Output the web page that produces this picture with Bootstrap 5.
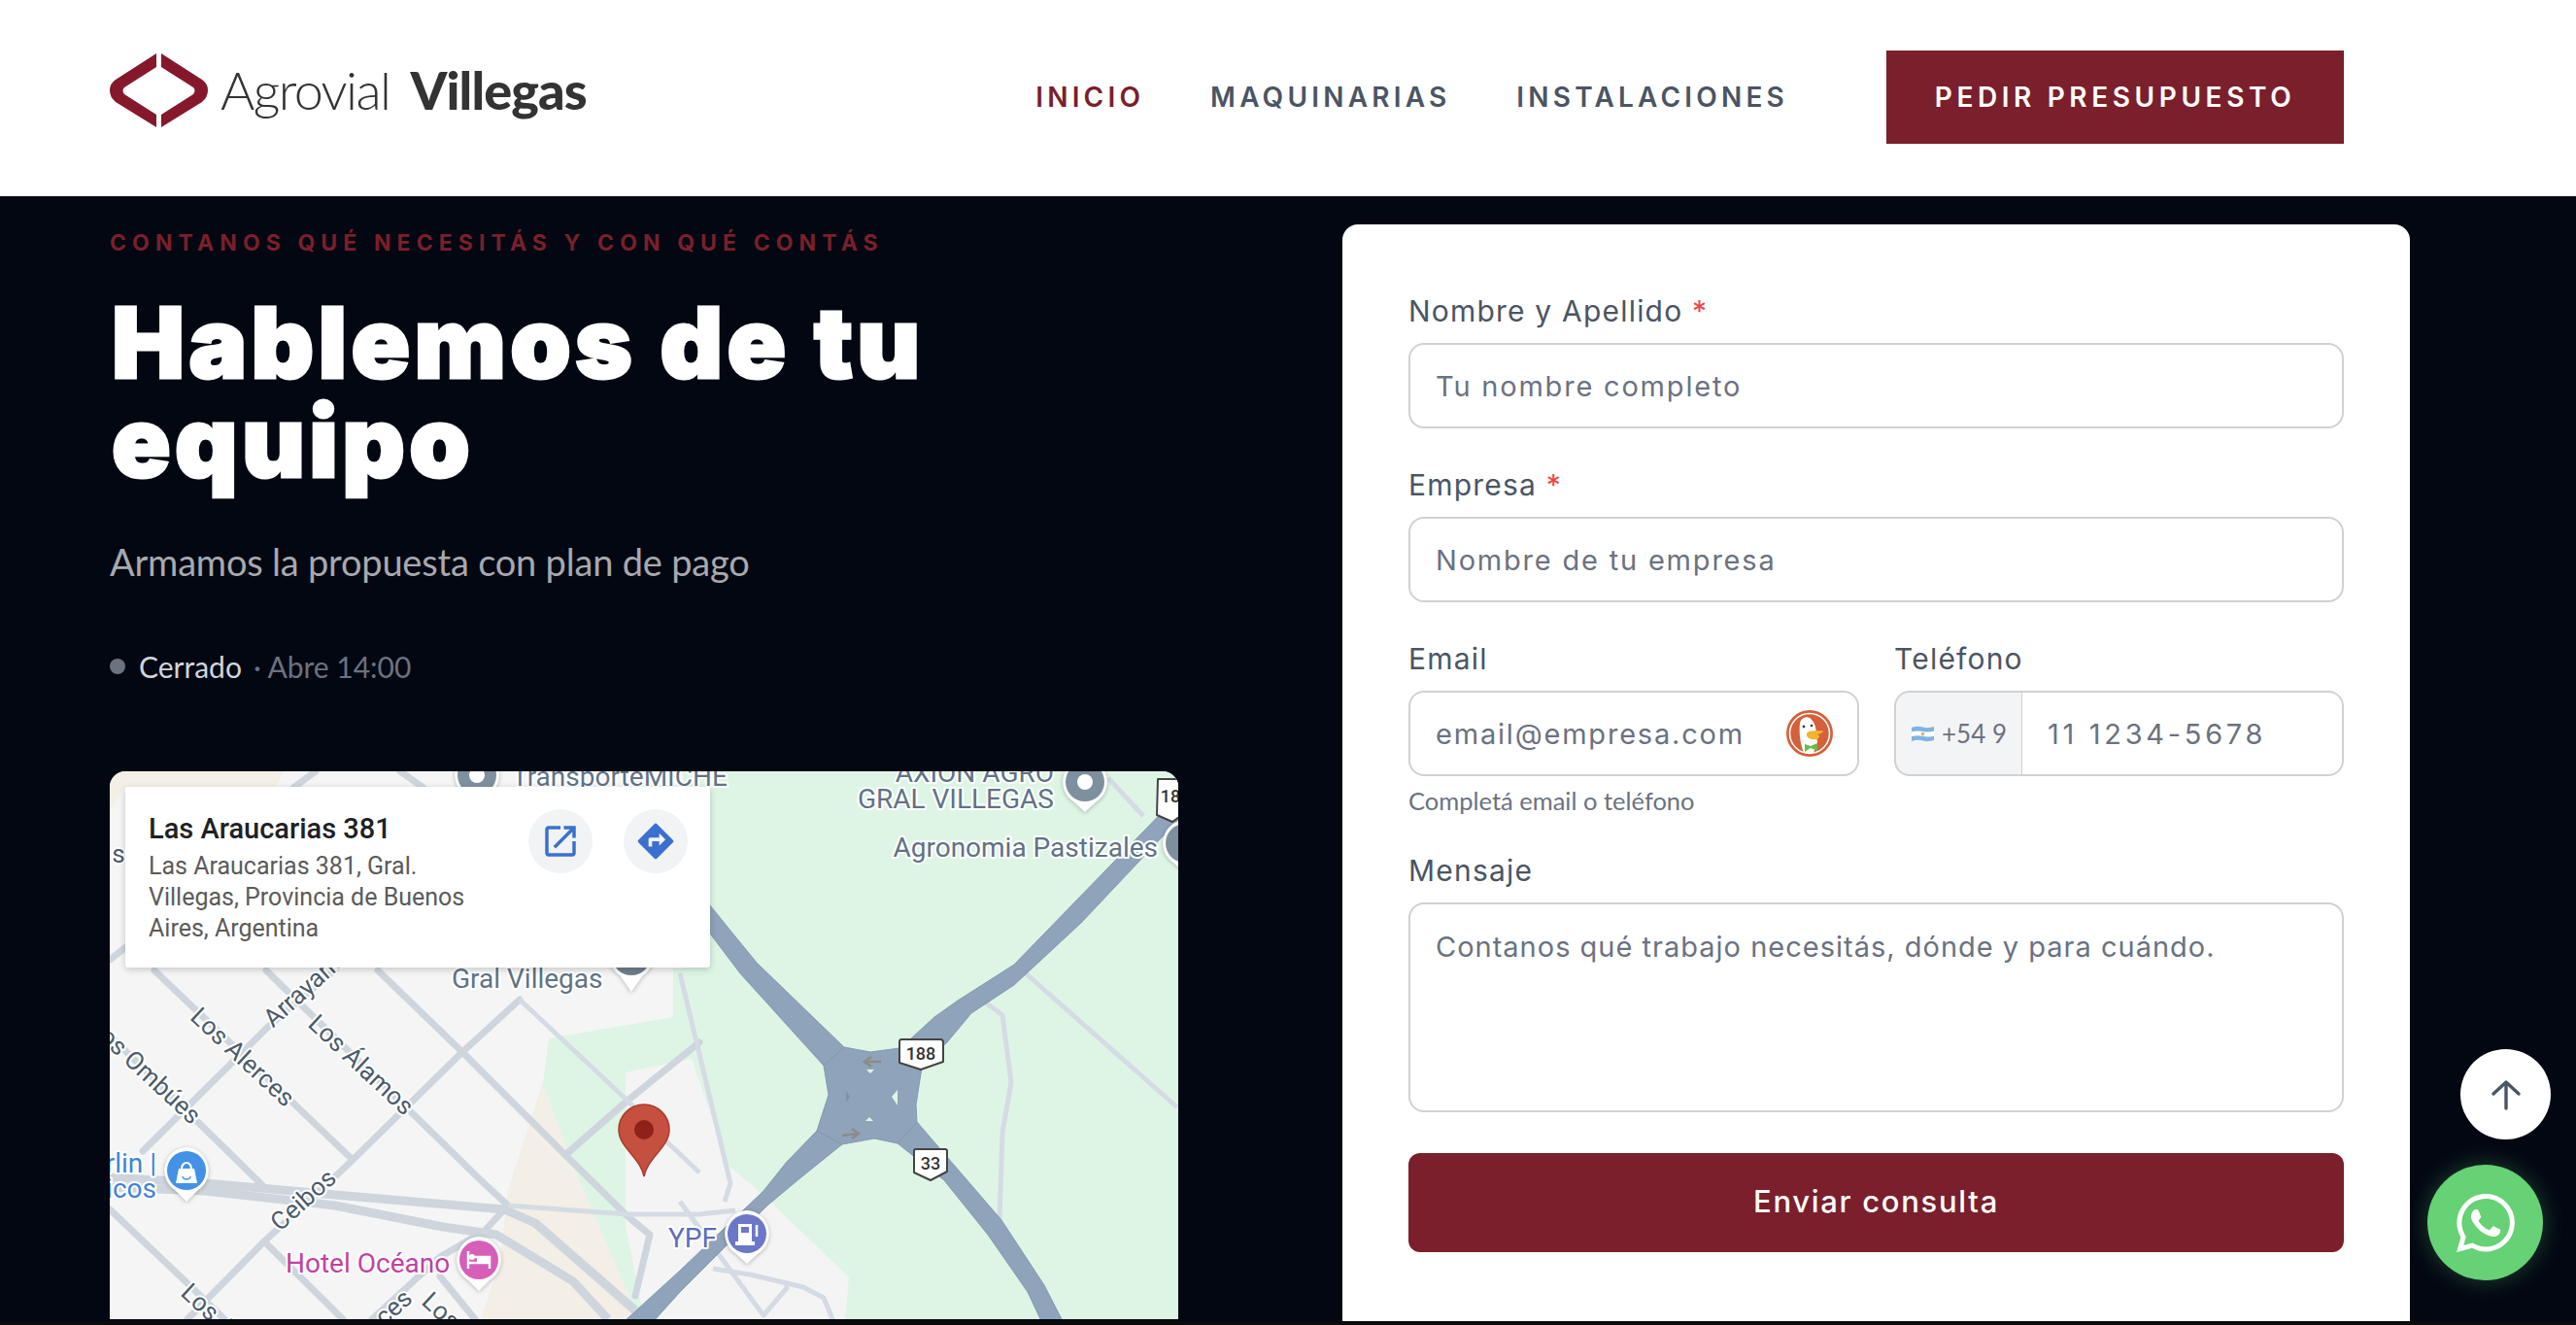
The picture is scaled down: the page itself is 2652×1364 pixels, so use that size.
<!DOCTYPE html>
<html lang="es">
<head>
  <meta charset="UTF-8">
  <meta name="viewport" content="width=device-width, initial-scale=1.0">
  <title>Agrovial Villegas - Contacto</title>
  <link href="https://cdn.jsdelivr.net/npm/bootstrap@5.3.0/dist/css/bootstrap.min.css" rel="stylesheet">
  <style>
    body { background-color: #0b0b0b; height: 1364px; overflow: hidden; font-family: "Inter", "Liberation Sans", sans-serif; }
    .page-shell { height: 1360px; overflow: hidden; background-color: #030712; position: relative; }

    .top-bar { height: 202px; background: #fff; padding: 0 239px 2px 113px; }
    .logo-link { margin-bottom: 14px; }
    .logo-text { font-family: "Lato", sans-serif; font-size: 54px; color: #333; margin-left: 13px; letter-spacing: -1.6px; line-height: 1; font-weight: 300; }
    .logo-text b { font-weight: 900; letter-spacing: -0.9px; margin-left: 8px; }
    .menu-link { font-size: 28px; font-weight: 600; letter-spacing: 4.2px; color: #4b5563; text-decoration: none; }
    .menu-link.on { color: #7a1f2b; }
    .menu-gap { gap: 68px; margin-right: 101px; }
    .quote-btn { width: 471px; height: 96px; background: #7a1f2b; color: #fff; border: 0; border-radius: 0; font-size: 28px; font-weight: 600; letter-spacing: 4.6px; }

    .hero-wrap { padding: 29px 0 0 113px; gap: 169px; }
    .hero-left { width: 1100px; flex: none; }
    .kicker { font-size: 23px; font-weight: 700; color: #7a1f2b; letter-spacing: 6.1px; line-height: 1; margin: 8px 0 0; }
    .hero-title { font-size: 100px; font-weight: 900; color: #fff; -webkit-text-stroke: 3px #fff; line-height: 102px; letter-spacing: 4.4px; margin: 40px 0 0; padding-left: 2px; width: 900px; }
    .hero-sub { font-family: "Lato", sans-serif; font-size: 38px; color: #a7a9ae; line-height: 1; margin: 53px 0 0; letter-spacing: -0.2px; }
    .status-line { font-family: "Lato", sans-serif; font-size: 30px; line-height: 1; margin-top: 74px; color: #d1d5db; }
    .status-dot { width: 16px; height: 16px; border-radius: 50%; background: #6b7280; margin-right: 14px; }
    .status-next { color: #6b7280; margin-left: 12px; }

    .map-box { position: relative; width: 1100px; height: 564px; margin-top: 93px; border-radius: 16px 16px 0 0; overflow: hidden; background: #f5f5f5; }
    .map-box svg { display: block; font-family: "Roboto", sans-serif; }
    .map-label { font-size: 28px; fill: #5f7385; paint-order: stroke; stroke: #fff; stroke-width: 4px; stroke-linejoin: round; }
    .street { font-size: 26px; fill: #4c5b6b; paint-order: stroke; stroke: #fff; stroke-width: 4px; stroke-linejoin: round; }
    .shield-num { font-size: 18px; font-weight: 500; fill: #333; text-anchor: middle; }
    .map-card { position: absolute; left: 16px; top: 16px; width: 602px; height: 186px; background: #fff; border-radius: 3px; box-shadow: 0 2px 7px rgba(0,0,0,.2); padding: 25px 24px; font-family: "Roboto", sans-serif; }
    .map-card-title { font-size: 29px; font-weight: 500; color: #202124; line-height: 36px; }
    .map-card-addr { font-size: 25px; color: #5b5b5b; line-height: 32px; margin-top: 5px; width: 350px; }
    .map-round { width: 66px; height: 66px; border-radius: 50%; background: #f1f3f4; margin-top: -2px; }
    .map-actions { gap: 32px; margin-right: -1px; }

    .form-panel { width: 1099px; height: 1200px; flex: none; background: #fff; border-radius: 16px 16px 0 0; padding: 74px 68px 0; }
    .field-label { font-size: 30px; font-weight: 400; color: #4b5563; letter-spacing: 1.2px; line-height: 1; margin: 0 0 18px; display: block; }
    .field-label span { color: #ef4444; }
    .field-input { height: 88px; border: 2px solid #d1d1d1; border-radius: 16px; font-size: 29px; padding: 0 26px; color: #374151; letter-spacing: 1.8px; }
    .field-input::placeholder { color: #6b7280; opacity: 1; }
    .field-area { height: 216px; resize: none; padding-top: 22px; letter-spacing: 1px; }
    .field-block { margin-bottom: 43px; }
    .two-fields { gap: 36px; margin-bottom: 13px; }
    .email-col { width: 464px; flex: none; }
    .phone-col { width: 463px; flex: none; }
    .help-text { font-family: "Lato", sans-serif; font-size: 25.5px; color: #6b7280; line-height: 1; margin: 0 0 43px; }
    .email-wrap { position: relative; }
    .duck-mark { position: absolute; right: 27px; top: 20px; }
    .phone-prefix { width: 133px; flex: none; height: 88px; background: #f3f4f6; border: 2px solid #d1d1d1; border-radius: 16px 0 0 16px; color: #6b7280; font-family: "Lato", sans-serif; font-size: 26px; padding: 0 0 0 16px; gap: 8px; }
    .phone-input { border-radius: 0 16px 16px 0 !important; border-left: 0; letter-spacing: 3.7px; }
    .send-btn { width: 100%; height: 102px; background: #7a1f2b; color: #fff; border: 0; border-radius: 12px; font-size: 31px; font-weight: 500; letter-spacing: 1.7px; margin-top: -1px; }

    .go-top { position: absolute; left: 2533px; top: 1080px; width: 93px; height: 93px; border-radius: 50%; background: #fff; border: 0; padding: 0; }
    .wa-float { position: absolute; left: 2499px; top: 1199px; width: 119px; height: 119px; border-radius: 50%; background: #66d175; box-shadow: 0 0 24px rgba(102,209,117,.3); }
  </style>
</head>
<body>
<div class="page-shell">

  <header class="top-bar d-flex align-items-center">
    <a class="logo-link d-flex align-items-center text-decoration-none" href="#">
      <svg width="101" height="76" viewBox="0 0 101 76" fill="#85192b">
        <path d="M48 0L6 27Q0 31 0 38Q0 45 6 50L48 76V63L15 42Q12 38 15 35L48 14Z"/>
        <path d="M53 0L95 27Q101 31 101 38Q101 45 95 50L53 76V63L86 42Q89 38 86 35L53 14Z"/>
      </svg>
      <span class="logo-text">Agrovial <b>Villegas</b></span>
    </a>
    <nav class="d-flex align-items-center ms-auto menu-gap">
      <a class="menu-link on" href="#">INICIO</a>
      <a class="menu-link" href="#">MAQUINARIAS</a>
      <a class="menu-link" href="#">INSTALACIONES</a>
    </nav>
    <button class="btn quote-btn">PEDIR PRESUPUESTO</button>
  </header>

  <main class="hero-wrap d-flex align-items-start">
    <section class="hero-left">
      <p class="kicker">CONTANOS QUÉ NECESITÁS Y CON QUÉ CONTÁS</p>
      <h1 class="hero-title">Hablemos de tu equipo</h1>
      <p class="hero-sub">Armamos la propuesta con plan de pago</p>
      <div class="status-line d-flex align-items-center">
        <span class="status-dot"></span>Cerrado<span class="status-next">· Abre 14:00</span>
      </div>

      <div class="map-box">
        <svg width="1100" height="564" viewBox="0 0 1100 564">
          <!-- land -->
          <polygon fill="#def5e5" points="590,0 1100,0 1100,564 382,564 402,506 410,432 446,320 452,275 580,253 580,203 590,203"/>
          <polygon fill="#f3efe6" points="446,320 477,406 545,564 382,564 402,506 410,432"/>
          <polygon fill="#f3efe6" points="0,0 180,0 170,16 16,16 0,40"/>
          <polygon fill="#f4f4f4" points="531,310 599,296 637,406 677,440 761,521 757,564 550,564 531,469"/>

          <!-- streets -->
          <g fill="none" stroke="#ced5dd" stroke-width="7" stroke-linejoin="round" stroke-linecap="round">
            <path d="M46 205L248 398"/>
            <path d="M161 205L382 421L410 447"/>
            <path d="M276 205L363 289L469 395L533 458L556 477L541 540"/>
            <path d="M0 272L157 426"/>
            <path d="M34 391L165 261L236 201"/>
            <path d="M80 564L159 484L244 406L363 289L422 235"/>
            <path d="M469 395L533 339L607 279"/>
            <path d="M0 451L82 529L118 564"/>
            <path d="M159 484L240 564"/>
            <path d="M299 0L323 17M189 17L212 0"/>
            <path d="M0 194L28 172"/>
            <path d="M270 564L340 500L386 473L406 451"/>
            <path d="M340 520L376 564"/>
          </g>
          <g fill="none" stroke="#ced5dd" stroke-width="9" stroke-linejoin="round">
            <path d="M0 418L98 424L232 436L406 451L438 465L541 555"/>
            <path d="M0 428L98 432L232 447L343 469L398 477L477 525L513 564"/>
          </g>
          <g fill="none" stroke="#d5dbe4" stroke-width="5" stroke-linejoin="round">
            <path d="M422 235L533 339L572 380L607 413"/>
            <path d="M587 208L639 424L633 443"/>
            <path d="M410 447L533 456L607 456L644 452"/>
            <path d="M935 201L1099 346"/>
            <path d="M899 236L919 251L928 320L919 372L916 462"/>
            <path d="M1028 7L1064 46"/>
            <path d="M587 443L673 560L697 532L697 525"/>
            <path d="M621 512L659 518L714 531L735 542L745 566"/>
          </g>

          <!-- route 33 / 188 -->
          <g fill="#8fa3ba" stroke="#8399b3" stroke-width="1" stroke-linejoin="round">
            <polygon points="756,284 666,197 639,164 618,138 590,110 580,125 601,141 618,167 649,208 735,303"/>
            <polygon points="1100,25 931,199 873,236 849,253 825,275 835,305 862,279 887,249 931,220 1000,156 1100,50"/>
            <polygon points="831,361 918,462 962,529 981,566 959,566 945,536 904,477 859,421 811,383"/>
            <polygon points="728,370 697,402 673,432 587,514 530,566 560,566 587,536 635,488 677,447 708,421 754,384"/>
            <polygon points="756,284 783,289 813,285 836,305 830,343 831,361 811,383 787,378 754,384 728,370 740,333 735,303"/>
          </g>
          <polygon fill="#def5e5" points="779,307 787,307 783,311"/>
          <polygon fill="#def5e5" points="805,335 811,328 811,344"/>
          <polygon fill="#7e94ae" points="758,329 762,335 758,341"/>
          <polygon fill="#def5e5" points="778,360 786,360 782,356"/>
          <path d="M794 299H778M784 294L777 299L784 304" fill="none" stroke="#8b8b8b" stroke-width="2.5"/>
          <path d="M754 375L770 373M764 368L771 373L764 378" fill="none" stroke="#8b8b8b" stroke-width="2.5"/>

          <!-- shields -->
          <g fill="#fff" stroke="#444" stroke-width="2" stroke-linejoin="round">
            <path d="M815 276H855Q858 276 858 279V299L835 307L813 300V279Q813 276 815 276Z"/>
            <path d="M830 389H860Q862 389 862 391V412L845 421L828 413V391Q828 389 830 389Z"/>
            <path d="M1079 8H1104V45L1094 52L1078 45Z"/>
          </g>
          <text class="shield-num" x="835" y="297">188</text>
          <text class="shield-num" x="845" y="410">33</text>
          <text class="shield-num" x="1092" y="32">18</text>

          <!-- place labels -->
          <text class="map-label" x="414" y="15">TransporteMICHE</text>
          <text class="map-label" x="972" y="11" text-anchor="end">AXION AGRO</text>
          <text class="map-label" x="972" y="38" text-anchor="end">GRAL VILLEGAS</text>
          <text class="map-label" x="1079" y="88" text-anchor="end">Agronomia Pastizales</text>
          <text class="map-label" x="352" y="223">Gral Villegas</text>
          <text class="map-label" x="181" y="516" style="fill:#c23fa3">Hotel Océano</text>
          <text class="map-label" x="625" y="490" text-anchor="end" style="fill:#5c6bc0">YPF</text>
          <text class="map-label" x="48" y="413" text-anchor="end" style="fill:#3f83d8">rlin |</text>
          <text class="map-label" x="48" y="439" text-anchor="end" style="fill:#3f83d8">icos</text>

          <!-- street names -->
          <text class="street" x="9" y="85" text-anchor="middle" dominant-baseline="central">s</text>
          <text class="street" text-anchor="middle" dominant-baseline="central" transform="translate(137 294) rotate(43)">Los Alerces</text>
          <text class="street" text-anchor="middle" dominant-baseline="central" transform="translate(259 302) rotate(43)">Los Álamos</text>
          <text class="street" dominant-baseline="central" transform="translate(162 258) rotate(-42)">Arrayanes</text>
          <text class="street" text-anchor="end" dominant-baseline="central" transform="translate(90 358) rotate(43)">os Ombúes</text>
          <text class="street" text-anchor="middle" dominant-baseline="central" transform="translate(199 441) rotate(-42)">Ceibos</text>
          <text class="street" dominant-baseline="central" transform="translate(78 532) rotate(43)">Los Alerces</text>
          <text class="street" text-anchor="end" dominant-baseline="central" transform="translate(307 538) rotate(-42)">ces</text>
          <text class="street" dominant-baseline="central" transform="translate(326 541) rotate(43)">Los</text>

          <!-- pins -->
          <g fill="#fff" style="filter:drop-shadow(0 1px 2px rgba(0,0,0,.25))">
            <path d="M378 -20a24 24 0 0 1 12 44L378 36L366 24a24 24 0 0 1 12-44Z"/>
            <path d="M1004 -13a24 24 0 0 1 12 44L1004 42L992 31a24 24 0 0 1 12-44Z"/>
            <path d="M1107 50a24 24 0 0 1 12 44L1107 105L1095 94a24 24 0 0 1 12-44Z"/>
            <path d="M537 166a24 24 0 0 1 12 44L537 227L525 210a24 24 0 0 1 12-44Z"/>
            <path d="M79 387a24 24 0 0 1 12 44L79 443L67 431a24 24 0 0 1 12-44Z"/>
            <path d="M380 479a24 24 0 0 1 12 44L380 535L368 523a24 24 0 0 1 12-44Z"/>
            <path d="M656 452a24 24 0 0 1 12 44L656 507L644 496a24 24 0 0 1 12-44Z"/>
          </g>
          <circle cx="378" cy="4" r="20" fill="#7e8f9e"/><circle cx="378" cy="4" r="8" fill="#fff"/>
          <circle cx="1004" cy="11" r="20" fill="#7e8f9e"/><circle cx="1004" cy="11" r="8" fill="#fff"/>
          <circle cx="1107" cy="74" r="20" fill="#7e8f9e"/>
          <circle cx="537" cy="190" r="20" fill="#6f7f8e"/>
          <circle cx="79" cy="411" r="20" fill="#4392e6"/>
          <path d="M71 409H87L90 424H68Z" fill="#fff"/><path d="M74 409a5 6 0 0 1 10 0" fill="none" stroke="#fff" stroke-width="2"/>
          <path d="M75 417a4 3 0 0 0 8 0" fill="none" stroke="#4392e6" stroke-width="1.5"/>
          <circle cx="380" cy="503" r="20" fill="#d65fb8"/>
          <path d="M369 494V512M369 506H391V512M391 506V500H376" fill="none" stroke="#fff" stroke-width="2.5"/>
          <rect x="378" y="499" width="13" height="7" fill="#fff"/><circle cx="373" cy="500" r="3" fill="#fff"/>
          <circle cx="656" cy="476" r="20" fill="#6b78c8"/>
          <path d="M647 466H661V484H664V488H644V484H647Z" fill="#fff"/><rect x="650" y="469" width="8" height="6" fill="#6b78c8"/>
          <path d="M666 467V479" stroke="#fff" stroke-width="2.5"/>

          <!-- marker -->
          <path d="M550 417C546 397 524 387 524 369A26 26 0 0 1 576 369C576 387 554 397 550 417Z" fill="#c5503f" stroke="#a83b2c" stroke-width="1.5"/>
          <circle cx="550" cy="369" r="10" fill="#8e2118"/>
        </svg>

        <div class="map-card d-flex justify-content-between align-items-start">
          <div>
            <div class="map-card-title">Las Araucarias 381</div>
            <div class="map-card-addr">Las Araucarias 381, Gral. Villegas, Provincia de Buenos Aires, Argentina</div>
          </div>
          <div class="map-actions d-flex">
            <span class="map-round d-flex align-items-center justify-content-center">
              <svg width="42" height="42" viewBox="0 0 24 24" fill="#3b70d0"><path d="M19 19H5V5h7V3H5c-1.11 0-2 .9-2 2v14c0 1.1.89 2 2 2h14c1.1 0 2-.9 2-2v-7h-2v7zM14 3v2h3.59l-9.83 9.83 1.41 1.41L19 6.41V10h2V3h-7z"/></svg>
            </span>
            <span class="map-round d-flex align-items-center justify-content-center">
              <svg width="44" height="44" viewBox="0 0 24 24" fill="#3b70d0"><path d="M21.71 11.29l-9-9a.996.996 0 00-1.41 0l-9 9a.996.996 0 000 1.41l9 9c.39.39 1.02.39 1.41 0l9-9a.996.996 0 000-1.41zM14 14.5V12h-4v3H8v-4c0-.55.45-1 1-1h5V7.5l3.5 3.5-3.5 3.5z"/></svg>
            </span>
          </div>
        </div>
      </div>
    </section>

    <section class="form-panel">
      <form>
        <div class="field-block">
          <label class="field-label">Nombre y Apellido <span>*</span></label>
          <input type="text" class="form-control field-input" placeholder="Tu nombre completo">
        </div>
        <div class="field-block">
          <label class="field-label">Empresa <span>*</span></label>
          <input type="text" class="form-control field-input" placeholder="Nombre de tu empresa">
        </div>
        <div class="d-flex two-fields">
          <div class="email-col">
            <label class="field-label">Email</label>
            <div class="email-wrap">
              <input type="email" class="form-control field-input" placeholder="email@empresa.com">
              <svg class="duck-mark" width="48" height="48" viewBox="0 0 48 48">
                <circle cx="24" cy="24" r="24" fill="#d5603a"/>
                <circle cx="24" cy="24" r="20.5" fill="none" stroke="#fff" stroke-width="1.6"/>
                <path d="M14 14C15 6 24 5 27 11C31 16 31 24 32 34L28 44H18C14 34 13 22 14 14Z" fill="#fff"/>
                <circle cx="18" cy="17" r="1.4" fill="#24405e"/><circle cx="26" cy="16" r="1.3" fill="#24405e"/>
                <path d="M21 24C24 20 31 22 38 21C37 24 34 25 31 25C35 25 35 29 31 30C26 31 20 29 21 24Z" fill="#f2b52e"/>
                <path d="M19 35L25 37L32 34V42L25 39L19 43Z" fill="#67bd45"/>
              </svg>
            </div>
          </div>
          <div class="phone-col">
            <label class="field-label">Teléfono</label>
            <div class="input-group flex-nowrap">
              <span class="phone-prefix d-flex align-items-center">
                <svg width="23" height="17" viewBox="0 0 23 17"><path d="M0 2Q6 0 11.5 1.5T23 1V15Q17 17 11.5 15.5T0 16Z" fill="#7fb3e3"/><path d="M0 6.3Q6 4.8 11.5 6T23 5.8V10.7Q17 12 11.5 10.8T0 11Z" fill="#fff"/><circle cx="11.5" cy="8.5" r="1.8" fill="#e6b547"/></svg>
                +54 9
              </span>
              <input type="tel" class="form-control field-input phone-input" placeholder="11 1234-5678">
            </div>
          </div>
        </div>
        <p class="help-text">Completá email o teléfono</p>
        <div class="field-block">
          <label class="field-label">Mensaje</label>
          <textarea class="form-control field-input field-area" placeholder="Contanos qué trabajo necesitás, dónde y para cuándo."></textarea>
        </div>
        <button type="button" class="btn send-btn">Enviar consulta</button>
      </form>
    </section>
  </main>

  <button class="go-top d-flex align-items-center justify-content-center" aria-label="Subir">
    <svg width="32" height="32" viewBox="0 0 32 32" fill="none" stroke="#4b5563" stroke-width="3.4" stroke-linecap="round" stroke-linejoin="round"><path d="M16 30V3M3 15L16 3L29 15"/></svg>
  </button>
  <a class="wa-float d-flex align-items-center justify-content-center" href="#" aria-label="WhatsApp">
    <svg width="60" height="60" viewBox="0 0 24 24" fill="#fff"><path d="M17.472 14.382c-.297-.149-1.758-.867-2.03-.967-.273-.099-.471-.148-.67.15-.197.297-.767.966-.94 1.164-.173.199-.347.223-.644.075-.297-.15-1.255-.463-2.39-1.475-.883-.788-1.48-1.761-1.653-2.059-.173-.297-.018-.458.13-.606.134-.133.298-.347.446-.52.149-.174.198-.298.298-.497.099-.198.05-.371-.025-.52-.075-.149-.669-1.612-.916-2.207-.242-.579-.487-.5-.669-.51-.173-.008-.371-.01-.57-.01-.198 0-.52.074-.792.372-.272.297-1.04 1.016-1.04 2.479 0 1.462 1.065 2.875 1.213 3.074.149.198 2.096 3.2 5.077 4.487.709.306 1.262.489 1.694.625.712.227 1.36.195 1.871.118.571-.085 1.758-.719 2.006-1.413.248-.694.248-1.289.173-1.413-.074-.124-.272-.198-.57-.347m-5.421 7.403h-.004a9.87 9.87 0 01-5.031-1.378l-.361-.214-3.741.982.998-3.648-.235-.374a9.86 9.86 0 01-1.51-5.26c.001-5.45 4.436-9.884 9.888-9.884 2.64 0 5.122 1.03 6.988 2.898a9.825 9.825 0 012.893 6.994c-.003 5.45-4.437 9.884-9.885 9.884m8.413-18.297A11.815 11.815 0 0012.05 0C5.495 0 .16 5.335.157 11.892c0 2.096.547 4.142 1.588 5.945L.057 24l6.305-1.654a11.882 11.882 0 005.683 1.448h.005c6.554 0 11.89-5.335 11.893-11.893a11.821 11.821 0 00-3.48-8.413z"/></svg>
  </a>
</div>
<script src="https://cdn.jsdelivr.net/npm/bootstrap@5.3.0/dist/js/bootstrap.bundle.min.js"></script>
</body>
</html>
